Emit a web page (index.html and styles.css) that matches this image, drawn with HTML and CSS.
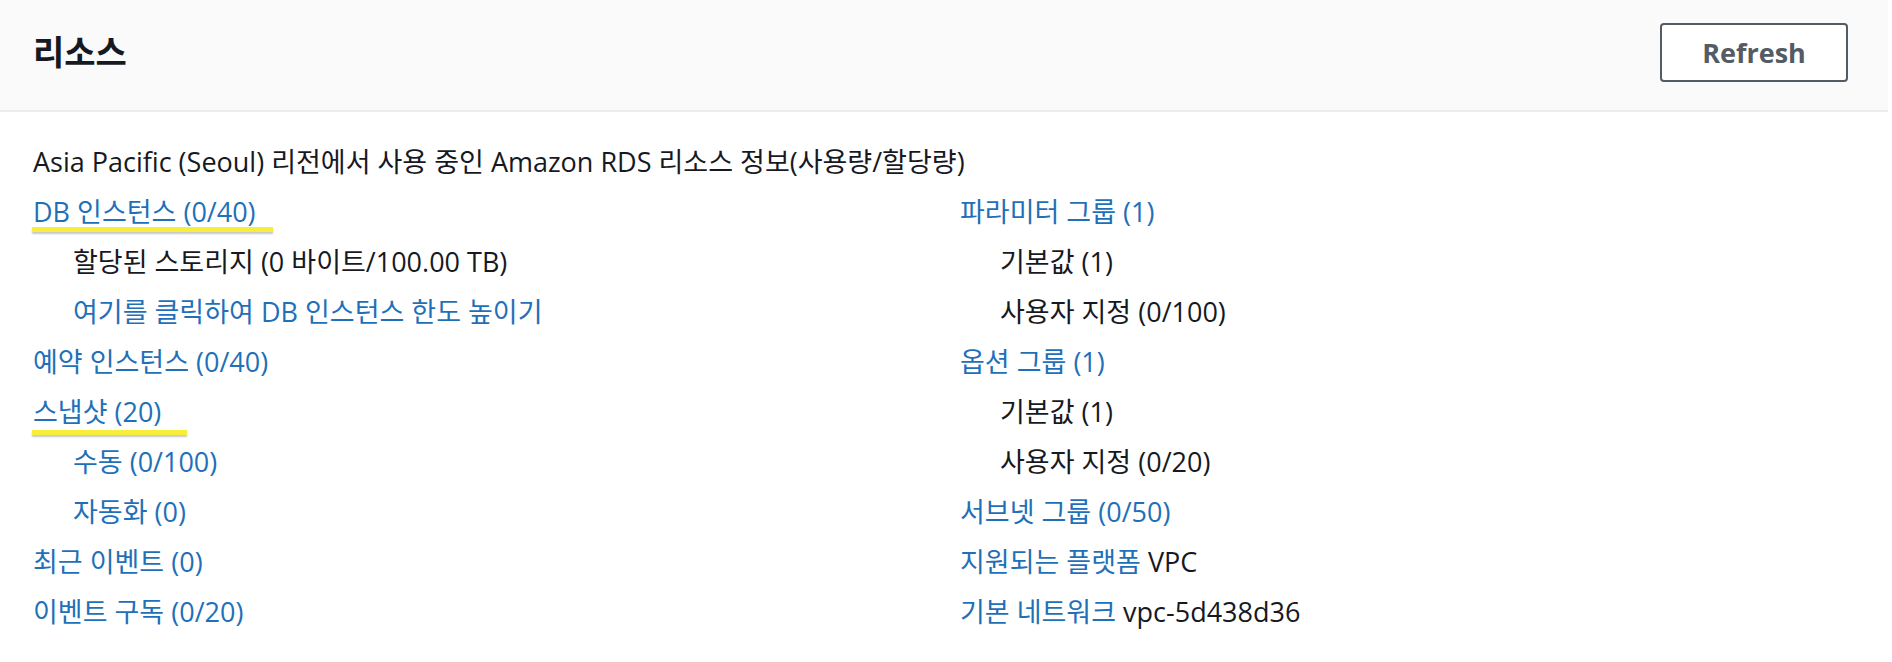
FILE: index.html
```html
<!DOCTYPE html>
<html lang="ko">
<head>
<meta charset="utf-8">
<title>리소스</title>
<link rel="stylesheet" href="styles.css">
</head>
<body>
<section class="panel">
  <header class="panel-header">
    <h2 class="panel-title">리소스</h2>
    <button class="btn" type="button">Refresh</button>
  </header>
  <div class="panel-body">
    <p class="intro">Asia Pacific (Seoul) 리전에서 사용 중인 Amazon RDS 리소스 정보(사용량/할당량)</p>
    <div class="cols">
      <ul class="list">
        <li><a class="link mark mark-wide" href="#">DB 인스턴스 (0/40)</a></li>
        <li class="sub">할당된 스토리지 (0 바이트/100.00 TB)</li>
        <li class="sub"><a class="link" href="#">여기를 클릭하여 DB 인스턴스 한도 높이기</a></li>
        <li><a class="link" href="#">예약 인스턴스 (0/40)</a></li>
        <li><a class="link mark mark-narrow" href="#">스냅샷 (20)</a></li>
        <li class="sub"><a class="link" href="#">수동 (0/100)</a></li>
        <li class="sub"><a class="link" href="#">자동화 (0)</a></li>
        <li><a class="link" href="#">최근 이벤트 (0)</a></li>
        <li><a class="link" href="#">이벤트 구독 (0/20)</a></li>
      </ul>
      <ul class="list">
        <li><a class="link" href="#">파라미터 그룹 (1)</a></li>
        <li class="sub">기본값 (1)</li>
        <li class="sub">사용자 지정 (0/100)</li>
        <li><a class="link" href="#">옵션 그룹 (1)</a></li>
        <li class="sub">기본값 (1)</li>
        <li class="sub">사용자 지정 (0/20)</li>
        <li><a class="link" href="#">서브넷 그룹 (0/50)</a></li>
        <li><a class="link" href="#">지원되는 플랫폼</a> VPC</li>
        <li><a class="link" href="#">기본 네트워크</a> vpc-5d438d36</li>
      </ul>
    </div>
  </div>
</section>
</body>
</html>
```

FILE: styles.css
```css
html, body {
  margin: 0;
  padding: 0;
  background: #ffffff;
}

body {
  font-family: "Open Sans", "Noto Sans CJK KR", sans-serif;
  color: #16191f;
}

.panel {
  width: 1888px;
  min-height: 662px;
  background: #ffffff;
}

.panel-header {
  box-sizing: border-box;
  height: 112px;
  display: flex;
  align-items: center;
  justify-content: space-between;
  padding: 0 40px 0 33px;
  background: #fafafa;
  border-bottom: 2px solid #eaeded;
}

.panel-title {
  margin: 0 0 6px 0;
  font-size: 34px;
  font-weight: 700;
  line-height: 40px;
  color: #16191f;
}

.btn {
  width: 188px;
  height: 59px;
  margin-bottom: 5px;
  box-sizing: border-box;
  border: 2px solid #545b64;
  border-radius: 4px;
  background: #ffffff;
  color: #545b64;
  font-family: "Open Sans", sans-serif;
  font-size: 27px;
  font-weight: 700;
  padding: 0;
}

.panel-body {
  padding: 25px 0 0 33px;
  font-size: 27px;
  line-height: 50px;
}

.intro {
  margin: 0;
  height: 50px;
}

.cols {
  display: grid;
  grid-template-columns: 927px 1fr;
}

.list {
  list-style: none;
  margin: 0;
  padding: 0;
}

.list li {
  height: 50px;
  white-space: nowrap;
}

.list li.sub {
  padding-left: 40px;
}

.link {
  color: #1f70b8;
  text-decoration: none;
}

.mark {
  position: relative;
}

.mark::after {
  content: "";
  position: absolute;
  left: -1px;
  height: 5px;
  background: #f7ee3c;
  box-shadow: 0 2px 2px rgba(0, 0, 0, 0.22);
}

.mark-wide::after {
  right: -17px;
  bottom: -2px;
}

.mark-narrow::after {
  right: -26px;
  bottom: -5px;
}
```
